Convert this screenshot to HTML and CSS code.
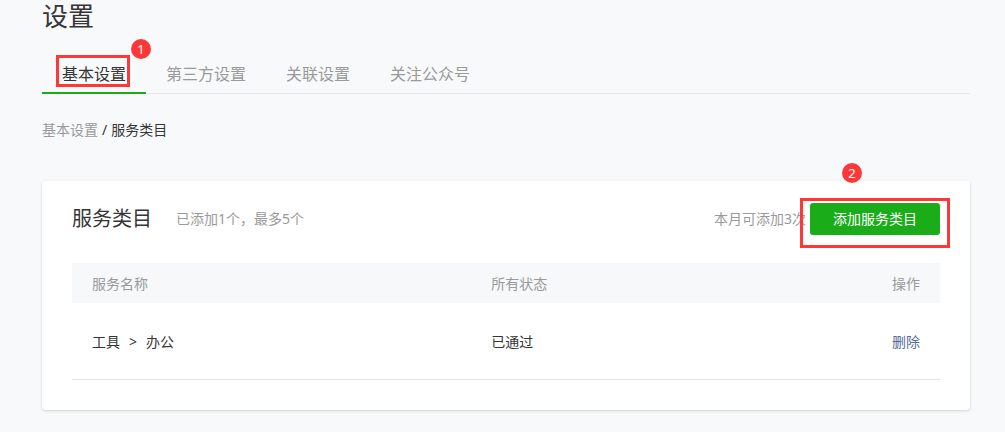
FILE: index.html
```html
<!DOCTYPE html>
<html lang="zh-CN">
<head>
<meta charset="utf-8">
<meta name="viewport" content="width=device-width, initial-scale=1">
<title>设置</title>
<link rel="stylesheet" href="styles.css">
</head>
<body>
<main class="page">
  <h1 class="page-title">设置</h1>
  <nav class="tabs">
    <a class="tab tab-active" href="#basic">基本设置<span class="mark mark-tab"></span><span class="badge badge-tab">1</span></a>
    <a class="tab" href="#third">第三方设置</a>
    <a class="tab" href="#linked">关联设置</a>
    <a class="tab" href="#follow">关注公众号</a>
  </nav>
  <nav class="crumbs"><a class="crumb-link" href="#basic">基本设置</a><span>/</span><span>服务类目</span></nav>
  <section class="card">
    <header class="card-head">
      <h2 class="card-title">服务类目</h2>
      <span class="card-note">已添加1个，最多5个</span>
      <div class="card-actions">
        <span class="quota">本月可添加3次</span>
        <div class="button-wrap">
          <button class="button" type="button">添加服务类目</button>
          <span class="mark mark-button"></span>
          <span class="badge badge-button">2</span>
        </div>
      </div>
    </header>
    <table class="table">
      <thead>
        <tr><th class="col-name">服务名称</th><th>所有状态</th><th class="col-action">操作</th></tr>
      </thead>
      <tbody>
        <tr>
          <td><span class="path"><span>工具</span><span>&gt;</span><span>办公</span></span></td>
          <td>已通过</td>
          <td class="col-action"><a class="delete" href="#delete">删除</a></td>
        </tr>
      </tbody>
    </table>
  </section>
</main>
</body>
</html>
```
FILE: styles.css
```css
* {
  box-sizing: border-box;
}

body {
  margin: 0;
  background: #f8f9fb;
  color: #353535;
  font-family: "Noto Sans", "Noto Sans CJK SC", sans-serif;
  font-size: 14px;
  line-height: 20px;
}

a {
  color: inherit;
  text-decoration: none;
}

.page {
  padding: 0 35px 22px 42px;
}

.page-title {
  margin: 0 0 22px;
  font-size: 26px;
  font-weight: 400;
  line-height: 32px;
}

.tabs {
  display: flex;
  height: 40px;
  box-shadow: inset 0 -1px #e4e8eb;
}

.tab {
  position: relative;
  padding: 0 20px;
  color: #9a9a9a;
  font-size: 16px;
  line-height: 40px;
}

.tab-active {
  border-bottom: 2px solid #1aad19;
  color: #353535;
}

.mark {
  position: absolute;
  border: 3px solid #fc3838;
  pointer-events: none;
}

.mark-tab {
  top: 1px;
  left: 14px;
  width: 74px;
  height: 32px;
}

.mark-button {
  top: -5px;
  left: -10px;
  width: 150px;
  height: 50px;
}

.badge {
  position: absolute;
  width: 20px;
  height: 20px;
  border-radius: 50%;
  background: #fc3838;
  color: #fff;
  font-size: 13px;
  line-height: 20px;
  text-align: center;
}

.badge-tab {
  top: -15px;
  left: 89px;
}

.badge-button {
  top: -40px;
  left: 32px;
}

.crumbs {
  display: flex;
  gap: 4px;
  margin: 26px 0 41px;
}

.crumb-link {
  color: #9a9a9a;
}

.card {
  padding: 22px 30px 30px;
  border-radius: 4px;
  background: #fff;
  box-shadow: 0 1px 3px rgba(0, 0, 0, 0.16);
}

.card-head {
  display: flex;
  align-items: center;
  margin-bottom: 28px;
}

.card-title {
  margin: 0 24px 0 0;
  font-size: 20px;
  font-weight: 400;
  line-height: 32px;
}

.card-note,
.quota {
  color: #9a9a9a;
}

.card-actions {
  display: flex;
  align-items: center;
  gap: 4px;
  margin-left: auto;
}

.button-wrap {
  position: relative;
}

.button {
  display: block;
  width: 130px;
  height: 32px;
  padding: 0;
  border: 0;
  border-radius: 3px;
  background: #1aad19;
  color: #fff;
  font: inherit;
}

.table {
  width: 100%;
  border-collapse: collapse;
  table-layout: fixed;
}

.table th,
.table td {
  padding: 11px 20px 9px;
  font-weight: 400;
  text-align: left;
}

.table th {
  background: #f6f8f9;
  color: #9a9a9a;
}

.table td {
  padding: 29px 20px 27px;
  border-bottom: 1px solid #e4e4e4;
}

.table .col-name {
  width: 46%;
}

.table .col-action {
  width: 20%;
  text-align: right;
}

.path {
  display: flex;
  gap: 9px;
}

.delete {
  color: #576b95;
}
```
